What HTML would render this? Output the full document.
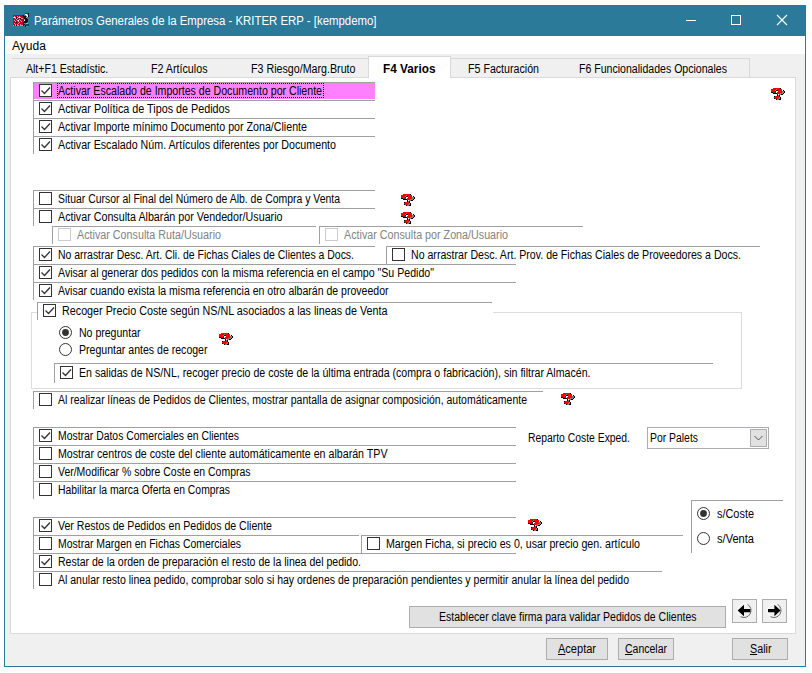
<!DOCTYPE html>
<html lang="es"><head><meta charset="utf-8"><title>Parámetros Generales de la Empresa - KRITER ERP</title>
<style>
html,body{margin:0;padding:0;background:#fff;}
body{width:812px;height:673px;position:relative;overflow:hidden;font-family:"Liberation Sans",sans-serif;}
.abs{position:absolute;box-sizing:content-box}
.row{position:absolute;border-left:1px solid #a0a0a0;border-top:1px solid #a0a0a0}
.cb{position:absolute;width:11px;height:11px;border:1px solid #333;background:#fff}
.cb.dis{border-color:#ccc}
.cb svg{position:absolute;left:0;top:0}
.t,.tt,.mn{position:absolute;white-space:pre;color:#000;font-size:12px;line-height:14px;transform-origin:0 0}
.t.dis{color:#838383}
.t.b{font-weight:bold}
.tt{color:#fff;font-size:12px;line-height:14px}
.mn{font-size:12px;line-height:14px}
.btn{position:absolute;background:#e1e1e1;border:1px solid #adadad}
u{text-decoration:underline}
</style></head><body>
<div class="abs" style="left:4px;top:5px;width:802px;height:662px;background:#f0f0f0"></div>
<div class="abs" style="left:4px;top:5px;width:802px;height:31px;background:#2b7a9a"></div>
<div class="abs" style="left:5px;top:36px;width:800px;height:18px;background:#fff"></div>
<div class="abs" style="left:4px;top:5px;width:1px;height:662px;background:#2b7a9a"></div>
<div class="abs" style="left:805px;top:5px;width:1px;height:662px;background:#2b7a9a"></div>
<div class="abs" style="left:4px;top:666px;width:802px;height:1px;background:#2b7a9a"></div>
<svg class="abs" style="left:13px;top:13px" width="17" height="14" viewBox="0 0 17 14" shape-rendering="crispEdges"><rect x="12" y="0" width="1" height="1" fill="#0c4468"/><rect x="13" y="0" width="1" height="1" fill="#0c4468"/><rect x="14" y="0" width="1" height="1" fill="#0c4468"/><rect x="15" y="0" width="1" height="1" fill="#101418"/><rect x="12" y="1" width="1" height="1" fill="#ffffff"/><rect x="13" y="1" width="1" height="1" fill="#ffffff"/><rect x="14" y="1" width="1" height="1" fill="#e890a4"/><rect x="15" y="1" width="1" height="1" fill="#101418"/><rect x="0" y="2" width="1" height="1" fill="#bc0028"/><rect x="1" y="2" width="1" height="1" fill="#bc0028"/><rect x="2" y="2" width="1" height="1" fill="#bc0028"/><rect x="3" y="2" width="1" height="1" fill="#bc0028"/><rect x="4" y="2" width="1" height="1" fill="#bc0028"/><rect x="5" y="2" width="1" height="1" fill="#bc0028"/><rect x="6" y="2" width="1" height="1" fill="#bc0028"/><rect x="7" y="2" width="1" height="1" fill="#bc0028"/><rect x="8" y="2" width="1" height="1" fill="#bc0028"/><rect x="9" y="2" width="1" height="1" fill="#bc0028"/><rect x="10" y="2" width="1" height="1" fill="#101418"/><rect x="13" y="2" width="1" height="1" fill="#ffffff"/><rect x="14" y="2" width="1" height="1" fill="#ffffff"/><rect x="15" y="2" width="1" height="1" fill="#101418"/><rect x="0" y="3" width="1" height="1" fill="#bc0028"/><rect x="1" y="3" width="1" height="1" fill="#e890a4"/><rect x="2" y="3" width="1" height="1" fill="#bc0028"/><rect x="3" y="3" width="1" height="1" fill="#bc0028"/><rect x="4" y="3" width="1" height="1" fill="#e890a4"/><rect x="5" y="3" width="1" height="1" fill="#bc0028"/><rect x="6" y="3" width="1" height="1" fill="#e890a4"/><rect x="7" y="3" width="1" height="1" fill="#bc0028"/><rect x="8" y="3" width="1" height="1" fill="#bc0028"/><rect x="9" y="3" width="1" height="1" fill="#bc0028"/><rect x="10" y="3" width="1" height="1" fill="#101418"/><rect x="11" y="3" width="1" height="1" fill="#101418"/><rect x="12" y="3" width="1" height="1" fill="#101418"/><rect x="14" y="3" width="1" height="1" fill="#ffffff"/><rect x="15" y="3" width="1" height="1" fill="#101418"/><rect x="0" y="4" width="1" height="1" fill="#e890a4"/><rect x="1" y="4" width="1" height="1" fill="#ffffff"/><rect x="2" y="4" width="1" height="1" fill="#e890a4"/><rect x="3" y="4" width="1" height="1" fill="#101418"/><rect x="4" y="4" width="1" height="1" fill="#bc0028"/><rect x="5" y="4" width="1" height="1" fill="#e890a4"/><rect x="6" y="4" width="1" height="1" fill="#ffffff"/><rect x="7" y="4" width="1" height="1" fill="#e890a4"/><rect x="8" y="4" width="1" height="1" fill="#bc0028"/><rect x="9" y="4" width="1" height="1" fill="#bc0028"/><rect x="10" y="4" width="1" height="1" fill="#bc0028"/><rect x="11" y="4" width="1" height="1" fill="#101418"/><rect x="12" y="4" width="1" height="1" fill="#101418"/><rect x="13" y="4" width="1" height="1" fill="#e890a4"/><rect x="0" y="5" width="1" height="1" fill="#bc0028"/><rect x="1" y="5" width="1" height="1" fill="#bc0028"/><rect x="2" y="5" width="1" height="1" fill="#e890a4"/><rect x="3" y="5" width="1" height="1" fill="#101418"/><rect x="4" y="5" width="1" height="1" fill="#e890a4"/><rect x="5" y="5" width="1" height="1" fill="#bc0028"/><rect x="6" y="5" width="1" height="1" fill="#bc0028"/><rect x="7" y="5" width="1" height="1" fill="#101418"/><rect x="8" y="5" width="1" height="1" fill="#e890a4"/><rect x="9" y="5" width="1" height="1" fill="#e890a4"/><rect x="10" y="5" width="1" height="1" fill="#bc0028"/><rect x="11" y="5" width="1" height="1" fill="#101418"/><rect x="12" y="5" width="1" height="1" fill="#101418"/><rect x="13" y="5" width="1" height="1" fill="#101418"/><rect x="0" y="6" width="1" height="1" fill="#bc0028"/><rect x="1" y="6" width="1" height="1" fill="#bc0028"/><rect x="2" y="6" width="1" height="1" fill="#bc0028"/><rect x="3" y="6" width="1" height="1" fill="#e890a4"/><rect x="4" y="6" width="1" height="1" fill="#bc0028"/><rect x="5" y="6" width="1" height="1" fill="#bc0028"/><rect x="6" y="6" width="1" height="1" fill="#e890a4"/><rect x="7" y="6" width="1" height="1" fill="#bc0028"/><rect x="8" y="6" width="1" height="1" fill="#bc0028"/><rect x="9" y="6" width="1" height="1" fill="#bc0028"/><rect x="10" y="6" width="1" height="1" fill="#bc0028"/><rect x="11" y="6" width="1" height="1" fill="#e890a4"/><rect x="12" y="6" width="1" height="1" fill="#101418"/><rect x="13" y="6" width="1" height="1" fill="#101418"/><rect x="14" y="6" width="1" height="1" fill="#101418"/><rect x="0" y="7" width="1" height="1" fill="#bc0028"/><rect x="1" y="7" width="1" height="1" fill="#e890a4"/><rect x="2" y="7" width="1" height="1" fill="#bc0028"/><rect x="3" y="7" width="1" height="1" fill="#bc0028"/><rect x="4" y="7" width="1" height="1" fill="#e890a4"/><rect x="5" y="7" width="1" height="1" fill="#ffffff"/><rect x="6" y="7" width="1" height="1" fill="#bc0028"/><rect x="7" y="7" width="1" height="1" fill="#e890a4"/><rect x="8" y="7" width="1" height="1" fill="#bc0028"/><rect x="9" y="7" width="1" height="1" fill="#bc0028"/><rect x="10" y="7" width="1" height="1" fill="#bc0028"/><rect x="11" y="7" width="1" height="1" fill="#ffffff"/><rect x="12" y="7" width="1" height="1" fill="#101418"/><rect x="13" y="7" width="1" height="1" fill="#101418"/><rect x="14" y="7" width="1" height="1" fill="#101418"/><rect x="0" y="8" width="1" height="1" fill="#bc0028"/><rect x="1" y="8" width="1" height="1" fill="#bc0028"/><rect x="2" y="8" width="1" height="1" fill="#e890a4"/><rect x="3" y="8" width="1" height="1" fill="#bc0028"/><rect x="4" y="8" width="1" height="1" fill="#bc0028"/><rect x="5" y="8" width="1" height="1" fill="#e890a4"/><rect x="6" y="8" width="1" height="1" fill="#bc0028"/><rect x="7" y="8" width="1" height="1" fill="#bc0028"/><rect x="8" y="8" width="1" height="1" fill="#e890a4"/><rect x="9" y="8" width="1" height="1" fill="#bc0028"/><rect x="10" y="8" width="1" height="1" fill="#bc0028"/><rect x="11" y="8" width="1" height="1" fill="#101418"/><rect x="12" y="8" width="1" height="1" fill="#101418"/><rect x="13" y="8" width="1" height="1" fill="#101418"/><rect x="14" y="8" width="1" height="1" fill="#101418"/><rect x="0" y="9" width="1" height="1" fill="#bc0028"/><rect x="1" y="9" width="1" height="1" fill="#bc0028"/><rect x="2" y="9" width="1" height="1" fill="#bc0028"/><rect x="3" y="9" width="1" height="1" fill="#101418"/><rect x="4" y="9" width="1" height="1" fill="#bc0028"/><rect x="5" y="9" width="1" height="1" fill="#bc0028"/><rect x="6" y="9" width="1" height="1" fill="#e890a4"/><rect x="7" y="9" width="1" height="1" fill="#bc0028"/><rect x="8" y="9" width="1" height="1" fill="#bc0028"/><rect x="9" y="9" width="1" height="1" fill="#bc0028"/><rect x="10" y="9" width="1" height="1" fill="#101418"/><rect x="11" y="9" width="1" height="1" fill="#101418"/><rect x="12" y="9" width="1" height="1" fill="#101418"/><rect x="13" y="9" width="1" height="1" fill="#101418"/><rect x="0" y="10" width="1" height="1" fill="#bc0028"/><rect x="1" y="10" width="1" height="1" fill="#e890a4"/><rect x="2" y="10" width="1" height="1" fill="#bc0028"/><rect x="3" y="10" width="1" height="1" fill="#bc0028"/><rect x="4" y="10" width="1" height="1" fill="#bc0028"/><rect x="5" y="10" width="1" height="1" fill="#e890a4"/><rect x="6" y="10" width="1" height="1" fill="#bc0028"/><rect x="7" y="10" width="1" height="1" fill="#bc0028"/><rect x="8" y="10" width="1" height="1" fill="#bc0028"/><rect x="9" y="10" width="1" height="1" fill="#bc0028"/><rect x="10" y="10" width="1" height="1" fill="#101418"/><rect x="13" y="10" width="1" height="1" fill="#e890a4"/><rect x="14" y="10" width="1" height="1" fill="#e890a4"/><rect x="0" y="11" width="1" height="1" fill="#bc0028"/><rect x="1" y="11" width="1" height="1" fill="#bc0028"/><rect x="2" y="11" width="1" height="1" fill="#e890a4"/><rect x="3" y="11" width="1" height="1" fill="#bc0028"/><rect x="4" y="11" width="1" height="1" fill="#e890a4"/><rect x="5" y="11" width="1" height="1" fill="#bc0028"/><rect x="6" y="11" width="1" height="1" fill="#bc0028"/><rect x="7" y="11" width="1" height="1" fill="#e890a4"/><rect x="8" y="11" width="1" height="1" fill="#bc0028"/><rect x="9" y="11" width="1" height="1" fill="#bc0028"/><rect x="10" y="11" width="1" height="1" fill="#101418"/><rect x="11" y="11" width="1" height="1" fill="#101418"/><rect x="13" y="11" width="1" height="1" fill="#0c4468"/><rect x="14" y="11" width="1" height="1" fill="#0c4468"/><rect x="15" y="11" width="1" height="1" fill="#0c4468"/><rect x="0" y="12" width="1" height="1" fill="#e890a4"/><rect x="1" y="12" width="1" height="1" fill="#bc0028"/><rect x="2" y="12" width="1" height="1" fill="#e890a4"/><rect x="3" y="12" width="1" height="1" fill="#101418"/><rect x="4" y="12" width="1" height="1" fill="#e890a4"/><rect x="5" y="12" width="1" height="1" fill="#e890a4"/><rect x="6" y="12" width="1" height="1" fill="#bc0028"/><rect x="7" y="12" width="1" height="1" fill="#e890a4"/><rect x="8" y="12" width="1" height="1" fill="#e890a4"/><rect x="9" y="12" width="1" height="1" fill="#e890a4"/><rect x="10" y="12" width="1" height="1" fill="#101418"/><rect x="12" y="12" width="1" height="1" fill="#101418"/><rect x="13" y="12" width="1" height="1" fill="#0c4468"/><rect x="14" y="12" width="1" height="1" fill="#0c4468"/><rect x="15" y="12" width="1" height="1" fill="#0c4468"/><rect x="12" y="13" width="1" height="1" fill="#101418"/><rect x="13" y="13" width="1" height="1" fill="#808890"/><rect x="14" y="13" width="1" height="1" fill="#808890"/></svg>
<svg class="abs" style="left:680px;top:5px" width="126" height="31" viewBox="0 0 126 31"><g stroke="#fff" stroke-width="1" fill="none" shape-rendering="crispEdges"><path d="M6 15.5 H16"/><rect x="51.5" y="10.5" width="9" height="9"/></g><g stroke="#fff" stroke-width="1.1" fill="none"><path d="M97 10 L107 20 M107 10 L97 20"/></g></svg>
<div class="abs" style="left:10px;top:77px;width:784px;height:555px;background:#fff;border:1px solid #d9d9d9"></div>
<div class="abs" style="left:12px;top:58px;width:737px;height:18px;background:#f0f0f0;border:1px solid #d9d9d9;border-bottom:none;border-left:none"></div>
<div class="abs" style="left:368px;top:56px;width:81px;height:21px;background:#fff;border:1px solid #d9d9d9;border-bottom:none"></div>
<div class="row" style="left:33px;top:82px;width:341px;height:17px"></div>
<div class="abs" style="left:34px;top:83px;width:341px;height:16px;background:#ff80ff"></div>
<div class="cb" style="left:39px;top:84px"><svg width="11" height="11" viewBox="0 0 11 11"><path d="M1.5 5.5 L4.5 8.5 L10 2.5" fill="none" stroke="#333" stroke-width="1.3"/></svg></div>
<div class="abs" style="left:57px;top:83px;width:265px;height:13px;border:1px dotted #000"></div>
<div class="row" style="left:33px;top:100px;width:341px;height:17px"></div>
<div class="cb" style="left:39px;top:102px"><svg width="11" height="11" viewBox="0 0 11 11"><path d="M1.5 5.5 L4.5 8.5 L10 2.5" fill="none" stroke="#333" stroke-width="1.3"/></svg></div>
<div class="row" style="left:33px;top:118px;width:341px;height:17px"></div>
<div class="cb" style="left:39px;top:120px"><svg width="11" height="11" viewBox="0 0 11 11"><path d="M1.5 5.5 L4.5 8.5 L10 2.5" fill="none" stroke="#333" stroke-width="1.3"/></svg></div>
<div class="row" style="left:33px;top:136px;width:341px;height:17px"></div>
<div class="cb" style="left:39px;top:138px"><svg width="11" height="11" viewBox="0 0 11 11"><path d="M1.5 5.5 L4.5 8.5 L10 2.5" fill="none" stroke="#333" stroke-width="1.3"/></svg></div>
<svg class="abs" style="left:771px;top:88px" width="14" height="12" viewBox="0 0 14 12" shape-rendering="crispEdges"><rect x="2" y="0" width="7" height="1" fill="#ff0000"/><rect x="9" y="0" width="1" height="1" fill="#000000"/><rect x="0" y="1" width="4" height="1" fill="#ff0000"/><rect x="4" y="1" width="1" height="1" fill="#404040"/><rect x="5" y="1" width="1" height="1" fill="#808080"/><rect x="6" y="1" width="5" height="1" fill="#ff0000"/><rect x="0" y="2" width="4" height="1" fill="#ff0000"/><rect x="4" y="2" width="1" height="1" fill="#808080"/><rect x="5" y="2" width="2" height="1" fill="#000000"/><rect x="7" y="2" width="4" height="1" fill="#ff0000"/><rect x="12" y="2" width="1" height="1" fill="#000000"/><rect x="0" y="3" width="4" height="1" fill="#ff0000"/><rect x="4" y="3" width="1" height="1" fill="#000000"/><rect x="6" y="3" width="1" height="1" fill="#ffffff"/><rect x="7" y="3" width="4" height="1" fill="#ff0000"/><rect x="11" y="3" width="2" height="1" fill="#808080"/><rect x="13" y="3" width="1" height="1" fill="#000000"/><rect x="0" y="4" width="2" height="1" fill="#000000"/><rect x="2" y="4" width="3" height="1" fill="#404040"/><rect x="6" y="4" width="5" height="1" fill="#ff0000"/><rect x="11" y="4" width="2" height="1" fill="#808080"/><rect x="13" y="4" width="1" height="1" fill="#000000"/><rect x="2" y="5" width="4" height="1" fill="#000000"/><rect x="6" y="5" width="3" height="1" fill="#ff0000"/><rect x="9" y="5" width="3" height="1" fill="#808080"/><rect x="12" y="5" width="1" height="1" fill="#000000"/><rect x="6" y="6" width="1" height="1" fill="#000000"/><rect x="8" y="6" width="2" height="1" fill="#808080"/><rect x="10" y="6" width="2" height="1" fill="#000000"/><rect x="6" y="7" width="1" height="1" fill="#000000"/><rect x="7" y="7" width="1" height="1" fill="#808080"/><rect x="8" y="7" width="1" height="1" fill="#000000"/><rect x="3" y="8" width="1" height="1" fill="#000000"/><rect x="4" y="8" width="4" height="1" fill="#ff0000"/><rect x="8" y="8" width="1" height="1" fill="#000000"/><rect x="3" y="9" width="5" height="1" fill="#ff0000"/><rect x="8" y="9" width="1" height="1" fill="#808080"/><rect x="9" y="9" width="1" height="1" fill="#000000"/><rect x="3" y="10" width="1" height="1" fill="#000000"/><rect x="4" y="10" width="3" height="1" fill="#ff0000"/><rect x="7" y="10" width="2" height="1" fill="#808080"/><rect x="9" y="10" width="1" height="1" fill="#000000"/><rect x="5" y="11" width="1" height="1" fill="#000000"/><rect x="6" y="11" width="2" height="1" fill="#808080"/><rect x="8" y="11" width="2" height="1" fill="#000000"/></svg>
<div class="row" style="left:33px;top:190px;width:341px;height:17px"></div>
<div class="cb" style="left:39px;top:192px"></div>
<svg class="abs" style="left:401px;top:194px" width="14" height="12" viewBox="0 0 14 12" shape-rendering="crispEdges"><rect x="2" y="0" width="7" height="1" fill="#ff0000"/><rect x="9" y="0" width="1" height="1" fill="#000000"/><rect x="0" y="1" width="4" height="1" fill="#ff0000"/><rect x="4" y="1" width="1" height="1" fill="#404040"/><rect x="5" y="1" width="1" height="1" fill="#808080"/><rect x="6" y="1" width="5" height="1" fill="#ff0000"/><rect x="0" y="2" width="4" height="1" fill="#ff0000"/><rect x="4" y="2" width="1" height="1" fill="#808080"/><rect x="5" y="2" width="2" height="1" fill="#000000"/><rect x="7" y="2" width="4" height="1" fill="#ff0000"/><rect x="12" y="2" width="1" height="1" fill="#000000"/><rect x="0" y="3" width="4" height="1" fill="#ff0000"/><rect x="4" y="3" width="1" height="1" fill="#000000"/><rect x="6" y="3" width="1" height="1" fill="#ffffff"/><rect x="7" y="3" width="4" height="1" fill="#ff0000"/><rect x="11" y="3" width="2" height="1" fill="#808080"/><rect x="13" y="3" width="1" height="1" fill="#000000"/><rect x="0" y="4" width="2" height="1" fill="#000000"/><rect x="2" y="4" width="3" height="1" fill="#404040"/><rect x="6" y="4" width="5" height="1" fill="#ff0000"/><rect x="11" y="4" width="2" height="1" fill="#808080"/><rect x="13" y="4" width="1" height="1" fill="#000000"/><rect x="2" y="5" width="4" height="1" fill="#000000"/><rect x="6" y="5" width="3" height="1" fill="#ff0000"/><rect x="9" y="5" width="3" height="1" fill="#808080"/><rect x="12" y="5" width="1" height="1" fill="#000000"/><rect x="6" y="6" width="1" height="1" fill="#000000"/><rect x="8" y="6" width="2" height="1" fill="#808080"/><rect x="10" y="6" width="2" height="1" fill="#000000"/><rect x="6" y="7" width="1" height="1" fill="#000000"/><rect x="7" y="7" width="1" height="1" fill="#808080"/><rect x="8" y="7" width="1" height="1" fill="#000000"/><rect x="3" y="8" width="1" height="1" fill="#000000"/><rect x="4" y="8" width="4" height="1" fill="#ff0000"/><rect x="8" y="8" width="1" height="1" fill="#000000"/><rect x="3" y="9" width="5" height="1" fill="#ff0000"/><rect x="8" y="9" width="1" height="1" fill="#808080"/><rect x="9" y="9" width="1" height="1" fill="#000000"/><rect x="3" y="10" width="1" height="1" fill="#000000"/><rect x="4" y="10" width="3" height="1" fill="#ff0000"/><rect x="7" y="10" width="2" height="1" fill="#808080"/><rect x="9" y="10" width="1" height="1" fill="#000000"/><rect x="5" y="11" width="1" height="1" fill="#000000"/><rect x="6" y="11" width="2" height="1" fill="#808080"/><rect x="8" y="11" width="2" height="1" fill="#000000"/></svg>
<div class="row" style="left:33px;top:208px;width:341px;height:17px"></div>
<div class="cb" style="left:39px;top:210px"></div>
<svg class="abs" style="left:401px;top:212px" width="14" height="12" viewBox="0 0 14 12" shape-rendering="crispEdges"><rect x="2" y="0" width="7" height="1" fill="#ff0000"/><rect x="9" y="0" width="1" height="1" fill="#000000"/><rect x="0" y="1" width="4" height="1" fill="#ff0000"/><rect x="4" y="1" width="1" height="1" fill="#404040"/><rect x="5" y="1" width="1" height="1" fill="#808080"/><rect x="6" y="1" width="5" height="1" fill="#ff0000"/><rect x="0" y="2" width="4" height="1" fill="#ff0000"/><rect x="4" y="2" width="1" height="1" fill="#808080"/><rect x="5" y="2" width="2" height="1" fill="#000000"/><rect x="7" y="2" width="4" height="1" fill="#ff0000"/><rect x="12" y="2" width="1" height="1" fill="#000000"/><rect x="0" y="3" width="4" height="1" fill="#ff0000"/><rect x="4" y="3" width="1" height="1" fill="#000000"/><rect x="6" y="3" width="1" height="1" fill="#ffffff"/><rect x="7" y="3" width="4" height="1" fill="#ff0000"/><rect x="11" y="3" width="2" height="1" fill="#808080"/><rect x="13" y="3" width="1" height="1" fill="#000000"/><rect x="0" y="4" width="2" height="1" fill="#000000"/><rect x="2" y="4" width="3" height="1" fill="#404040"/><rect x="6" y="4" width="5" height="1" fill="#ff0000"/><rect x="11" y="4" width="2" height="1" fill="#808080"/><rect x="13" y="4" width="1" height="1" fill="#000000"/><rect x="2" y="5" width="4" height="1" fill="#000000"/><rect x="6" y="5" width="3" height="1" fill="#ff0000"/><rect x="9" y="5" width="3" height="1" fill="#808080"/><rect x="12" y="5" width="1" height="1" fill="#000000"/><rect x="6" y="6" width="1" height="1" fill="#000000"/><rect x="8" y="6" width="2" height="1" fill="#808080"/><rect x="10" y="6" width="2" height="1" fill="#000000"/><rect x="6" y="7" width="1" height="1" fill="#000000"/><rect x="7" y="7" width="1" height="1" fill="#808080"/><rect x="8" y="7" width="1" height="1" fill="#000000"/><rect x="3" y="8" width="1" height="1" fill="#000000"/><rect x="4" y="8" width="4" height="1" fill="#ff0000"/><rect x="8" y="8" width="1" height="1" fill="#000000"/><rect x="3" y="9" width="5" height="1" fill="#ff0000"/><rect x="8" y="9" width="1" height="1" fill="#808080"/><rect x="9" y="9" width="1" height="1" fill="#000000"/><rect x="3" y="10" width="1" height="1" fill="#000000"/><rect x="4" y="10" width="3" height="1" fill="#ff0000"/><rect x="7" y="10" width="2" height="1" fill="#808080"/><rect x="9" y="10" width="1" height="1" fill="#000000"/><rect x="5" y="11" width="1" height="1" fill="#000000"/><rect x="6" y="11" width="2" height="1" fill="#808080"/><rect x="8" y="11" width="2" height="1" fill="#000000"/></svg>
<div class="row" style="left:52px;top:226px;width:263px;height:17px"></div>
<div class="cb dis" style="left:58px;top:228px"></div>
<div class="row" style="left:319px;top:226px;width:263px;height:17px"></div>
<div class="cb dis" style="left:325px;top:228px"></div>
<div class="row" style="left:33px;top:246px;width:341px;height:17px"></div>
<div class="cb" style="left:39px;top:248px"><svg width="11" height="11" viewBox="0 0 11 11"><path d="M1.5 5.5 L4.5 8.5 L10 2.5" fill="none" stroke="#333" stroke-width="1.3"/></svg></div>
<div class="row" style="left:386px;top:246px;width:373px;height:17px"></div>
<div class="cb" style="left:392px;top:248px"></div>
<div class="row" style="left:33px;top:264px;width:482px;height:17px"></div>
<div class="cb" style="left:39px;top:266px"><svg width="11" height="11" viewBox="0 0 11 11"><path d="M1.5 5.5 L4.5 8.5 L10 2.5" fill="none" stroke="#333" stroke-width="1.3"/></svg></div>
<div class="row" style="left:33px;top:282px;width:482px;height:17px"></div>
<div class="cb" style="left:39px;top:284px"><svg width="11" height="11" viewBox="0 0 11 11"><path d="M1.5 5.5 L4.5 8.5 L10 2.5" fill="none" stroke="#333" stroke-width="1.3"/></svg></div>
<div class="abs" style="left:31px;top:312px;width:709px;height:75px;border:1px solid #dcdcdc"></div>
<div class="abs" style="left:37px;top:302px;width:456px;height:18px;background:#fff"></div>
<div class="row" style="left:37px;top:302px;width:454px;height:17px"></div>
<div class="cb" style="left:43px;top:304px"><svg width="11" height="11" viewBox="0 0 11 11"><path d="M1.5 5.5 L4.5 8.5 L10 2.5" fill="none" stroke="#333" stroke-width="1.3"/></svg></div>
<svg class="abs" style="left:59px;top:326px" width="13" height="13" viewBox="0 0 13 13"><circle cx="6.5" cy="6.5" r="6" fill="#fff" stroke="#333" stroke-width="1"/><circle cx="6.5" cy="6.5" r="3.4" fill="#333"/></svg>
<svg class="abs" style="left:59px;top:343px" width="13" height="13" viewBox="0 0 13 13"><circle cx="6.5" cy="6.5" r="6" fill="#fff" stroke="#333" stroke-width="1"/></svg>
<svg class="abs" style="left:219px;top:333px" width="14" height="12" viewBox="0 0 14 12" shape-rendering="crispEdges"><rect x="2" y="0" width="7" height="1" fill="#ff0000"/><rect x="9" y="0" width="1" height="1" fill="#000000"/><rect x="0" y="1" width="4" height="1" fill="#ff0000"/><rect x="4" y="1" width="1" height="1" fill="#404040"/><rect x="5" y="1" width="1" height="1" fill="#808080"/><rect x="6" y="1" width="5" height="1" fill="#ff0000"/><rect x="0" y="2" width="4" height="1" fill="#ff0000"/><rect x="4" y="2" width="1" height="1" fill="#808080"/><rect x="5" y="2" width="2" height="1" fill="#000000"/><rect x="7" y="2" width="4" height="1" fill="#ff0000"/><rect x="12" y="2" width="1" height="1" fill="#000000"/><rect x="0" y="3" width="4" height="1" fill="#ff0000"/><rect x="4" y="3" width="1" height="1" fill="#000000"/><rect x="6" y="3" width="1" height="1" fill="#ffffff"/><rect x="7" y="3" width="4" height="1" fill="#ff0000"/><rect x="11" y="3" width="2" height="1" fill="#808080"/><rect x="13" y="3" width="1" height="1" fill="#000000"/><rect x="0" y="4" width="2" height="1" fill="#000000"/><rect x="2" y="4" width="3" height="1" fill="#404040"/><rect x="6" y="4" width="5" height="1" fill="#ff0000"/><rect x="11" y="4" width="2" height="1" fill="#808080"/><rect x="13" y="4" width="1" height="1" fill="#000000"/><rect x="2" y="5" width="4" height="1" fill="#000000"/><rect x="6" y="5" width="3" height="1" fill="#ff0000"/><rect x="9" y="5" width="3" height="1" fill="#808080"/><rect x="12" y="5" width="1" height="1" fill="#000000"/><rect x="6" y="6" width="1" height="1" fill="#000000"/><rect x="8" y="6" width="2" height="1" fill="#808080"/><rect x="10" y="6" width="2" height="1" fill="#000000"/><rect x="6" y="7" width="1" height="1" fill="#000000"/><rect x="7" y="7" width="1" height="1" fill="#808080"/><rect x="8" y="7" width="1" height="1" fill="#000000"/><rect x="3" y="8" width="1" height="1" fill="#000000"/><rect x="4" y="8" width="4" height="1" fill="#ff0000"/><rect x="8" y="8" width="1" height="1" fill="#000000"/><rect x="3" y="9" width="5" height="1" fill="#ff0000"/><rect x="8" y="9" width="1" height="1" fill="#808080"/><rect x="9" y="9" width="1" height="1" fill="#000000"/><rect x="3" y="10" width="1" height="1" fill="#000000"/><rect x="4" y="10" width="3" height="1" fill="#ff0000"/><rect x="7" y="10" width="2" height="1" fill="#808080"/><rect x="9" y="10" width="1" height="1" fill="#000000"/><rect x="5" y="11" width="1" height="1" fill="#000000"/><rect x="6" y="11" width="2" height="1" fill="#808080"/><rect x="8" y="11" width="2" height="1" fill="#000000"/></svg>
<div class="row" style="left:54px;top:363px;width:658px;height:19px"></div>
<div class="cb" style="left:60px;top:366px"><svg width="11" height="11" viewBox="0 0 11 11"><path d="M1.5 5.5 L4.5 8.5 L10 2.5" fill="none" stroke="#333" stroke-width="1.3"/></svg></div>
<div class="row" style="left:33px;top:391px;width:509px;height:17px"></div>
<div class="cb" style="left:39px;top:393px"></div>
<svg class="abs" style="left:561px;top:393px" width="14" height="12" viewBox="0 0 14 12" shape-rendering="crispEdges"><rect x="2" y="0" width="7" height="1" fill="#ff0000"/><rect x="9" y="0" width="1" height="1" fill="#000000"/><rect x="0" y="1" width="4" height="1" fill="#ff0000"/><rect x="4" y="1" width="1" height="1" fill="#404040"/><rect x="5" y="1" width="1" height="1" fill="#808080"/><rect x="6" y="1" width="5" height="1" fill="#ff0000"/><rect x="0" y="2" width="4" height="1" fill="#ff0000"/><rect x="4" y="2" width="1" height="1" fill="#808080"/><rect x="5" y="2" width="2" height="1" fill="#000000"/><rect x="7" y="2" width="4" height="1" fill="#ff0000"/><rect x="12" y="2" width="1" height="1" fill="#000000"/><rect x="0" y="3" width="4" height="1" fill="#ff0000"/><rect x="4" y="3" width="1" height="1" fill="#000000"/><rect x="6" y="3" width="1" height="1" fill="#ffffff"/><rect x="7" y="3" width="4" height="1" fill="#ff0000"/><rect x="11" y="3" width="2" height="1" fill="#808080"/><rect x="13" y="3" width="1" height="1" fill="#000000"/><rect x="0" y="4" width="2" height="1" fill="#000000"/><rect x="2" y="4" width="3" height="1" fill="#404040"/><rect x="6" y="4" width="5" height="1" fill="#ff0000"/><rect x="11" y="4" width="2" height="1" fill="#808080"/><rect x="13" y="4" width="1" height="1" fill="#000000"/><rect x="2" y="5" width="4" height="1" fill="#000000"/><rect x="6" y="5" width="3" height="1" fill="#ff0000"/><rect x="9" y="5" width="3" height="1" fill="#808080"/><rect x="12" y="5" width="1" height="1" fill="#000000"/><rect x="6" y="6" width="1" height="1" fill="#000000"/><rect x="8" y="6" width="2" height="1" fill="#808080"/><rect x="10" y="6" width="2" height="1" fill="#000000"/><rect x="6" y="7" width="1" height="1" fill="#000000"/><rect x="7" y="7" width="1" height="1" fill="#808080"/><rect x="8" y="7" width="1" height="1" fill="#000000"/><rect x="3" y="8" width="1" height="1" fill="#000000"/><rect x="4" y="8" width="4" height="1" fill="#ff0000"/><rect x="8" y="8" width="1" height="1" fill="#000000"/><rect x="3" y="9" width="5" height="1" fill="#ff0000"/><rect x="8" y="9" width="1" height="1" fill="#808080"/><rect x="9" y="9" width="1" height="1" fill="#000000"/><rect x="3" y="10" width="1" height="1" fill="#000000"/><rect x="4" y="10" width="3" height="1" fill="#ff0000"/><rect x="7" y="10" width="2" height="1" fill="#808080"/><rect x="9" y="10" width="1" height="1" fill="#000000"/><rect x="5" y="11" width="1" height="1" fill="#000000"/><rect x="6" y="11" width="2" height="1" fill="#808080"/><rect x="8" y="11" width="2" height="1" fill="#000000"/></svg>
<div class="row" style="left:33px;top:427px;width:482px;height:17px"></div>
<div class="cb" style="left:39px;top:429px"><svg width="11" height="11" viewBox="0 0 11 11"><path d="M1.5 5.5 L4.5 8.5 L10 2.5" fill="none" stroke="#333" stroke-width="1.3"/></svg></div>
<div class="row" style="left:33px;top:445px;width:482px;height:17px"></div>
<div class="cb" style="left:39px;top:447px"></div>
<div class="row" style="left:33px;top:463px;width:482px;height:17px"></div>
<div class="cb" style="left:39px;top:465px"></div>
<div class="row" style="left:33px;top:481px;width:482px;height:17px"></div>
<div class="cb" style="left:39px;top:483px"></div>
<div class="abs" style="left:647px;top:427px;width:120px;height:20px;background:#fff;border:1px solid #abadb3"></div>
<div class="abs" style="left:750px;top:429px;width:15px;height:16px;background:#e1e1e1;border:1px solid #adadad"></div>
<svg class="abs" style="left:750px;top:429px" width="17" height="18" viewBox="0 0 17 18"><path d="M4.5 7 L8.5 11 L12.5 7" fill="none" stroke="#555" stroke-width="1"/></svg>
<div class="row" style="left:33px;top:517px;width:482px;height:17px"></div>
<div class="cb" style="left:39px;top:519px"><svg width="11" height="11" viewBox="0 0 11 11"><path d="M1.5 5.5 L4.5 8.5 L10 2.5" fill="none" stroke="#333" stroke-width="1.3"/></svg></div>
<svg class="abs" style="left:528px;top:519px" width="14" height="12" viewBox="0 0 14 12" shape-rendering="crispEdges"><rect x="2" y="0" width="7" height="1" fill="#ff0000"/><rect x="9" y="0" width="1" height="1" fill="#000000"/><rect x="0" y="1" width="4" height="1" fill="#ff0000"/><rect x="4" y="1" width="1" height="1" fill="#404040"/><rect x="5" y="1" width="1" height="1" fill="#808080"/><rect x="6" y="1" width="5" height="1" fill="#ff0000"/><rect x="0" y="2" width="4" height="1" fill="#ff0000"/><rect x="4" y="2" width="1" height="1" fill="#808080"/><rect x="5" y="2" width="2" height="1" fill="#000000"/><rect x="7" y="2" width="4" height="1" fill="#ff0000"/><rect x="12" y="2" width="1" height="1" fill="#000000"/><rect x="0" y="3" width="4" height="1" fill="#ff0000"/><rect x="4" y="3" width="1" height="1" fill="#000000"/><rect x="6" y="3" width="1" height="1" fill="#ffffff"/><rect x="7" y="3" width="4" height="1" fill="#ff0000"/><rect x="11" y="3" width="2" height="1" fill="#808080"/><rect x="13" y="3" width="1" height="1" fill="#000000"/><rect x="0" y="4" width="2" height="1" fill="#000000"/><rect x="2" y="4" width="3" height="1" fill="#404040"/><rect x="6" y="4" width="5" height="1" fill="#ff0000"/><rect x="11" y="4" width="2" height="1" fill="#808080"/><rect x="13" y="4" width="1" height="1" fill="#000000"/><rect x="2" y="5" width="4" height="1" fill="#000000"/><rect x="6" y="5" width="3" height="1" fill="#ff0000"/><rect x="9" y="5" width="3" height="1" fill="#808080"/><rect x="12" y="5" width="1" height="1" fill="#000000"/><rect x="6" y="6" width="1" height="1" fill="#000000"/><rect x="8" y="6" width="2" height="1" fill="#808080"/><rect x="10" y="6" width="2" height="1" fill="#000000"/><rect x="6" y="7" width="1" height="1" fill="#000000"/><rect x="7" y="7" width="1" height="1" fill="#808080"/><rect x="8" y="7" width="1" height="1" fill="#000000"/><rect x="3" y="8" width="1" height="1" fill="#000000"/><rect x="4" y="8" width="4" height="1" fill="#ff0000"/><rect x="8" y="8" width="1" height="1" fill="#000000"/><rect x="3" y="9" width="5" height="1" fill="#ff0000"/><rect x="8" y="9" width="1" height="1" fill="#808080"/><rect x="9" y="9" width="1" height="1" fill="#000000"/><rect x="3" y="10" width="1" height="1" fill="#000000"/><rect x="4" y="10" width="3" height="1" fill="#ff0000"/><rect x="7" y="10" width="2" height="1" fill="#808080"/><rect x="9" y="10" width="1" height="1" fill="#000000"/><rect x="5" y="11" width="1" height="1" fill="#000000"/><rect x="6" y="11" width="2" height="1" fill="#808080"/><rect x="8" y="11" width="2" height="1" fill="#000000"/></svg>
<div class="row" style="left:33px;top:535px;width:325px;height:17px"></div>
<div class="cb" style="left:39px;top:537px"></div>
<div class="row" style="left:361px;top:535px;width:321px;height:17px"></div>
<div class="cb" style="left:367px;top:537px"></div>
<div class="row" style="left:33px;top:553px;width:482px;height:17px"></div>
<div class="cb" style="left:39px;top:555px"><svg width="11" height="11" viewBox="0 0 11 11"><path d="M1.5 5.5 L4.5 8.5 L10 2.5" fill="none" stroke="#333" stroke-width="1.3"/></svg></div>
<div class="row" style="left:33px;top:571px;width:628px;height:17px"></div>
<div class="cb" style="left:39px;top:573px"></div>
<div class="row" style="left:691px;top:500px;width:91px;height:52px"></div>
<svg class="abs" style="left:697px;top:507px" width="13" height="13" viewBox="0 0 13 13"><circle cx="6.5" cy="6.5" r="6" fill="#fff" stroke="#333" stroke-width="1"/><circle cx="6.5" cy="6.5" r="3.4" fill="#333"/></svg>
<svg class="abs" style="left:697px;top:532px" width="13" height="13" viewBox="0 0 13 13"><circle cx="6.5" cy="6.5" r="6" fill="#fff" stroke="#333" stroke-width="1"/></svg>
<div class="btn" style="left:409px;top:606px;width:315px;height:20px"></div>
<div class="btn" style="left:732px;top:599px;width:23px;height:22px;background:#f0f0f0"></div>
<div class="btn" style="left:762px;top:599px;width:23px;height:22px;background:#f0f0f0"></div>
<svg class="abs" style="left:732px;top:599px" width="25" height="24" viewBox="0 0 25 24"><circle cx="12.7" cy="11.7" r="7" fill="none" stroke="#fff" stroke-width="1"/><path d="M15.5 5.3 A7 7 0 0 1 8.5 17.6" fill="none" stroke="#555" stroke-width="0.9"/><path d="M5.6 11.5 L12 5.8 V9.9 H18.4 V13.2 H12 V17.2 Z" fill="#000"/></svg>
<svg class="abs" style="left:762px;top:599px" width="25" height="24" viewBox="0 0 25 24"><circle cx="12.7" cy="11.7" r="7" fill="none" stroke="#fff" stroke-width="1"/><path d="M15.5 5.3 A7 7 0 0 1 8.5 17.6" fill="none" stroke="#555" stroke-width="0.9"/><path d="M18.6 11.5 L12.4 5.8 V9.9 H6 V13.2 H12.4 V17.2 Z" fill="#000"/></svg>
<div class="btn" style="left:546px;top:638px;width:60px;height:20px"></div>
<div class="btn" style="left:618px;top:638px;width:54px;height:20px"></div>
<div class="btn" style="left:732px;top:638px;width:54px;height:20px"></div>
<div id="x0" class="tt" style="left:33.5px;top:14px;transform:scaleX(0.9498)">Parámetros Generales de la Empresa - KRITER ERP - [kempdemo]</div>
<div id="x1" class="mn" style="left:11.5px;top:38.5px;transform:scaleX(1.0055)">Ayuda</div>
<div id="x2" class="t" style="left:25.75px;top:62px;transform:scaleX(0.8778)">Alt+F1 Estadístic.</div>
<div id="x3" class="t" style="left:150.5px;top:62px;transform:scaleX(0.8917)">F2 Artículos</div>
<div id="x4" class="t" style="left:250.5px;top:62px;transform:scaleX(0.8902)">F3 Riesgo/Marg.Bruto</div>
<div id="x5" class="t b" style="left:382.5px;top:62px;transform:scaleX(0.9836)">F4 Varios</div>
<div id="x6" class="t" style="left:467.5px;top:62px;transform:scaleX(0.8870)">F5 Facturación</div>
<div id="x7" class="t" style="left:579px;top:62px;transform:scaleX(0.8804)">F6 Funcionalidades Opcionales</div>
<div id="x8" class="t" style="left:58px;top:84px;transform:scaleX(0.8835)">Activar Escalado de Importes de Documento por Cliente</div>
<div id="x9" class="t" style="left:58px;top:102px;transform:scaleX(0.8985)">Activar Política de Tipos de Pedidos</div>
<div id="x10" class="t" style="left:58px;top:120px;transform:scaleX(0.8889)">Activar Importe mínimo Documento por Zona/Cliente</div>
<div id="x11" class="t" style="left:58px;top:138px;transform:scaleX(0.8906)">Activar Escalado Núm. Artículos diferentes por Documento</div>
<div id="x12" class="t" style="left:58px;top:192px;transform:scaleX(0.8699)">Situar Cursor al Final del Número de Alb. de Compra y Venta</div>
<div id="x13" class="t" style="left:58px;top:210px;transform:scaleX(0.8927)">Activar Consulta Albarán por Vendedor/Usuario</div>
<div id="x14" class="t dis" style="left:77px;top:228px;transform:scaleX(0.8959)">Activar Consulta Ruta/Usuario</div>
<div id="x15" class="t dis" style="left:344px;top:228px;transform:scaleX(0.8941)">Activar Consulta por Zona/Usuario</div>
<div id="x16" class="t" style="left:58px;top:248px;transform:scaleX(0.8720)">No arrastrar Desc. Art. Cli. de Fichas Ciales de Clientes a Docs.</div>
<div id="x17" class="t" style="left:411px;top:248px;transform:scaleX(0.8825)">No arrastrar Desc. Art. Prov. de Fichas Ciales de Proveedores a Docs.</div>
<div id="x18" class="t" style="left:58px;top:266px;transform:scaleX(0.8843)">Avisar al generar dos pedidos con la misma referencia en el campo "Su Pedido"</div>
<div id="x19" class="t" style="left:58px;top:284px;transform:scaleX(0.8775)">Avisar cuando exista la misma referencia en otro albarán de proveedor</div>
<div id="x20" class="t" style="left:62px;top:304px;transform:scaleX(0.8964)">Recoger Precio Coste según NS/NL asociados a las lineas de Venta</div>
<div id="x21" class="t" style="left:78.5px;top:326px;transform:scaleX(0.8780)">No preguntar</div>
<div id="x22" class="t" style="left:78.5px;top:343px;transform:scaleX(0.8796)">Preguntar antes de recoger</div>
<div id="x23" class="t" style="left:79px;top:366px;transform:scaleX(0.8835)">En salidas de NS/NL, recoger precio de coste de la última entrada (compra o fabricación), sin filtrar Almacén.</div>
<div id="x24" class="t" style="left:58px;top:393px;transform:scaleX(0.8745)">Al realizar líneas de Pedidos de Clientes, mostrar pantalla de asignar composición, automáticamente</div>
<div id="x25" class="t" style="left:58px;top:429px;transform:scaleX(0.8671)">Mostrar Datos Comerciales en Clientes</div>
<div id="x26" class="t" style="left:58px;top:447px;transform:scaleX(0.8874)">Mostrar centros de coste del cliente automáticamente en albarán TPV</div>
<div id="x27" class="t" style="left:58px;top:465px;transform:scaleX(0.8720)">Ver/Modificar % sobre Coste en Compras</div>
<div id="x28" class="t" style="left:58px;top:483px;transform:scaleX(0.8654)">Habilitar la marca Oferta en Compras</div>
<div id="x29" class="t" style="left:528px;top:431px;transform:scaleX(0.8638)">Reparto Coste Exped.</div>
<div id="x30" class="t" style="left:650px;top:431px;transform:scaleX(0.8671)">Por Palets</div>
<div id="x31" class="t" style="left:58px;top:519px;transform:scaleX(0.8813)">Ver Restos de Pedidos en Pedidos de Cliente</div>
<div id="x32" class="t" style="left:58px;top:537px;transform:scaleX(0.8711)">Mostrar Margen en Fichas Comerciales</div>
<div id="x33" class="t" style="left:386px;top:537px;transform:scaleX(0.8877)">Margen Ficha, si precio es 0, usar precio gen. artículo</div>
<div id="x34" class="t" style="left:58px;top:555px;transform:scaleX(0.8785)">Restar de la orden de preparación el resto de la linea del pedido.</div>
<div id="x35" class="t" style="left:58px;top:573px;transform:scaleX(0.8761)">Al anular resto linea pedido, comprobar solo si hay ordenes de preparación pendientes y permitir anular la línea del pedido</div>
<div id="x36" class="t" style="left:717px;top:507px;transform:scaleX(0.9094)">s/Coste</div>
<div id="x37" class="t" style="left:717px;top:532px;transform:scaleX(0.9243)">s/Venta</div>
<div id="x38" class="t" style="left:438.5px;top:610px;transform:scaleX(0.8754)">Establecer clave firma para validar Pedidos de Clientes</div>
<div id="x39" class="t" style="left:558px;top:642px;transform:scaleX(0.9184)"><u>A</u>ceptar</div>
<div id="x40" class="t" style="left:625px;top:642px;transform:scaleX(0.8744)"><u>C</u>ancelar</div>
<div id="x41" class="t" style="left:749.5px;top:642px;transform:scaleX(0.8947)"><u>S</u>alir</div>
</body></html>
